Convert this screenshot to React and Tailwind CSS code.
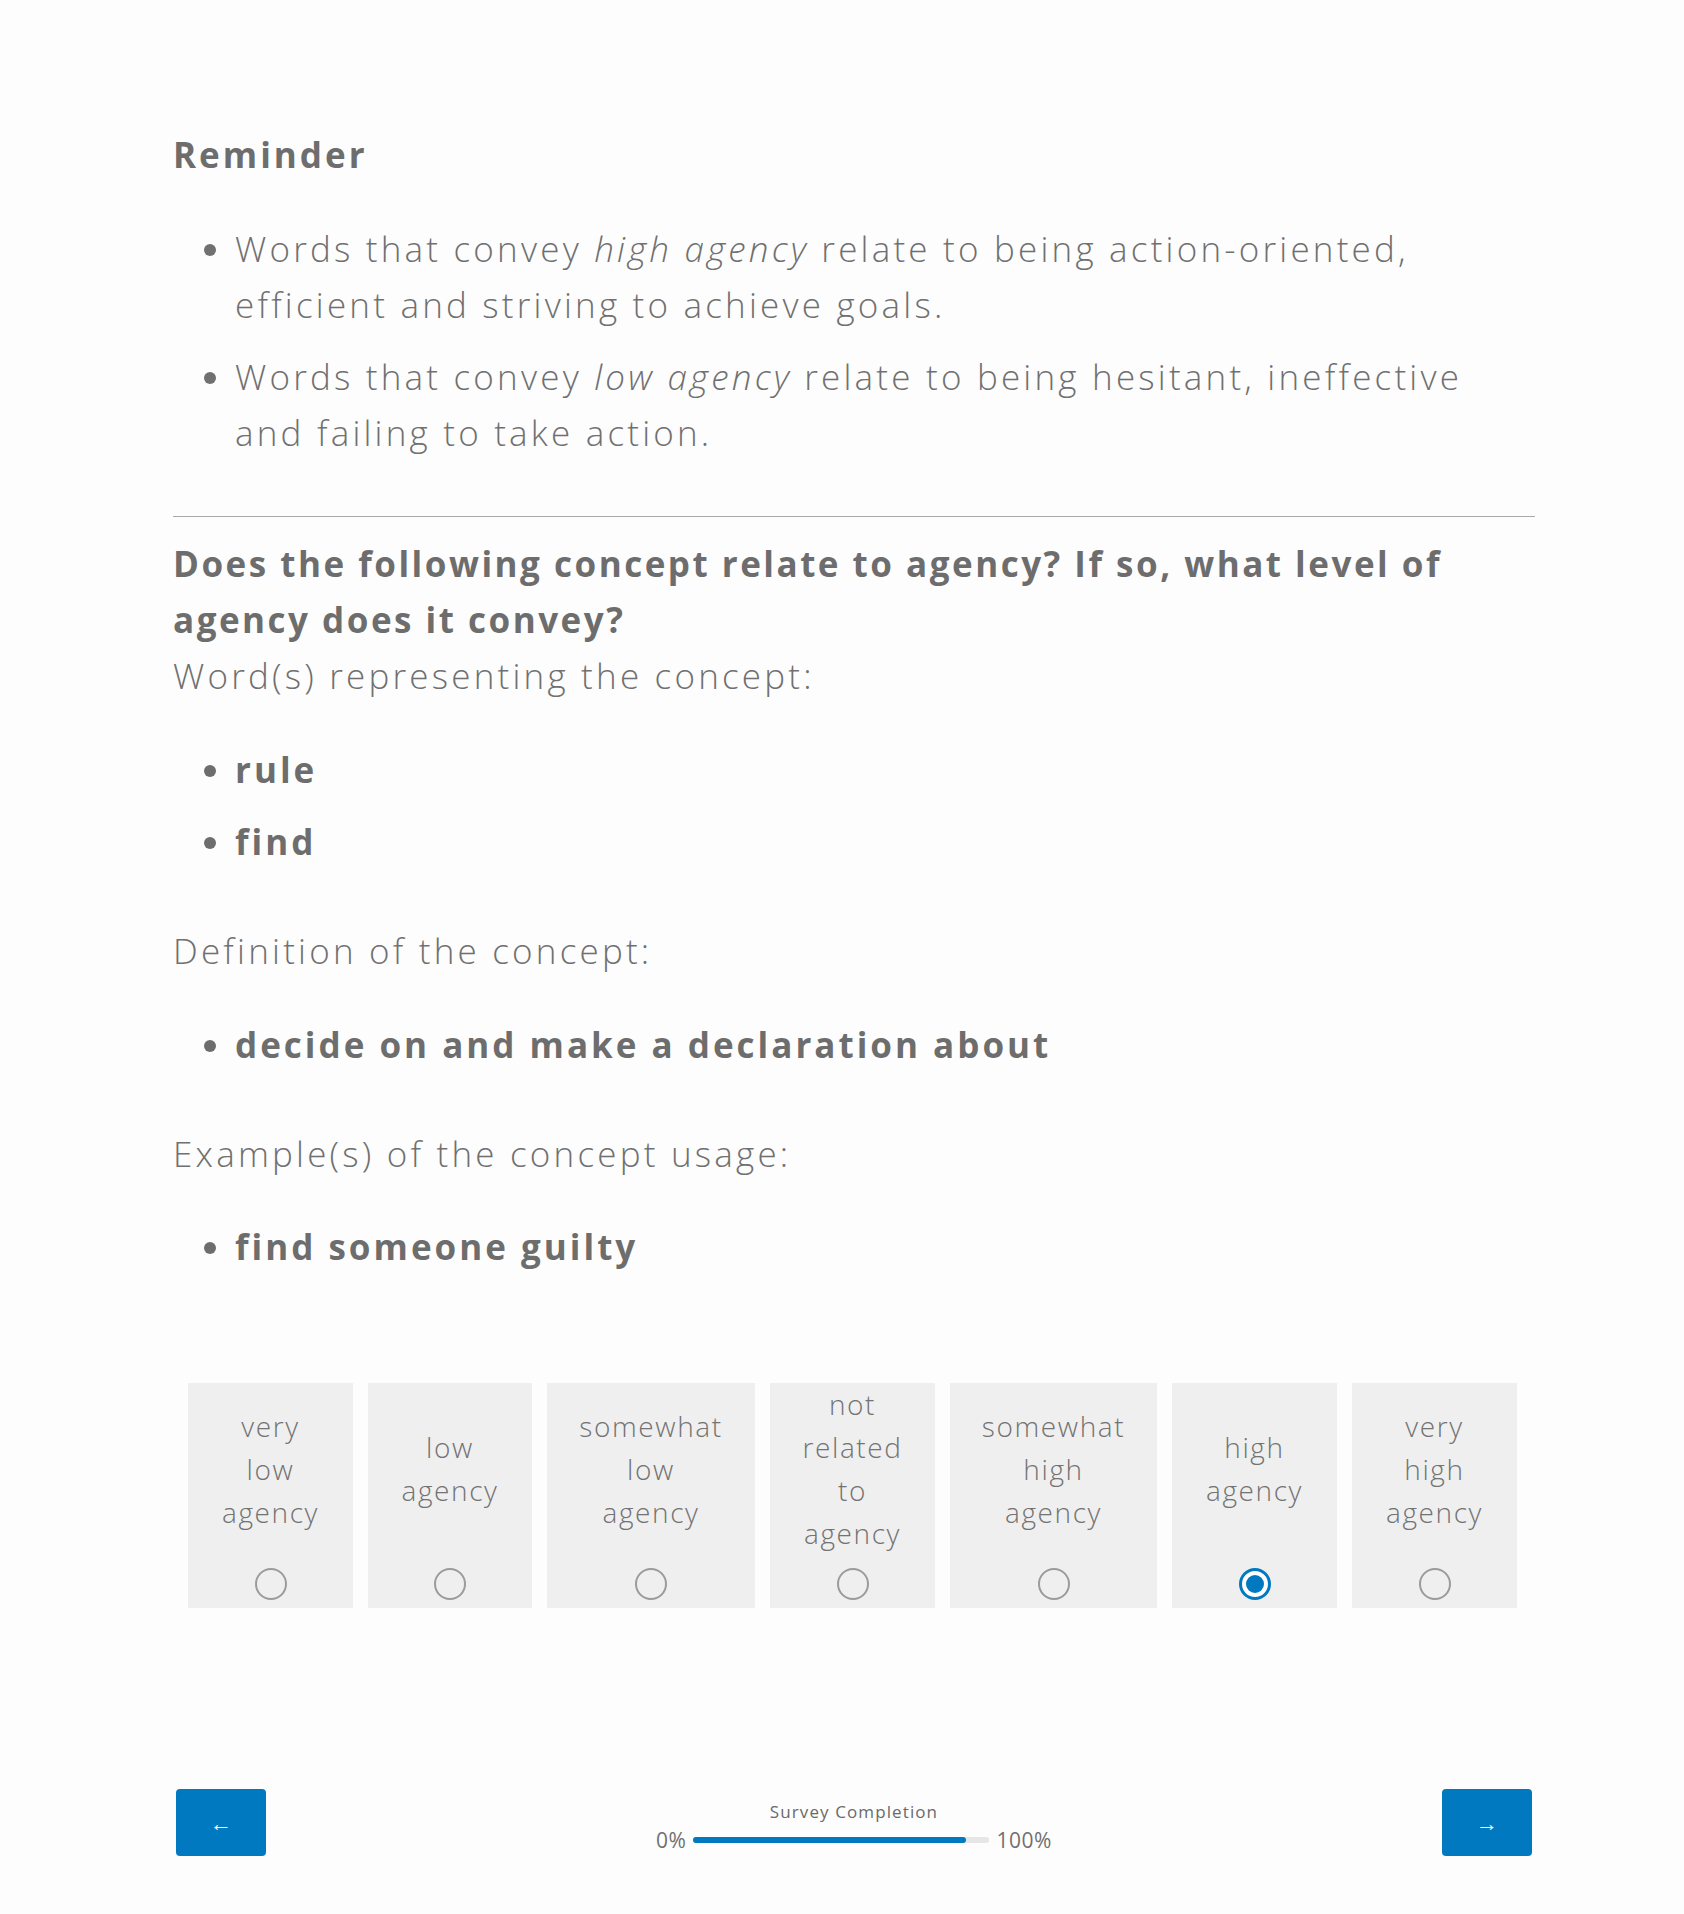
import { useState } from "react";

const options = [
  { id: 1, words: ["very", "low", "agency"], w: "w-[165px]" },
  { id: 2, words: ["low", "agency"], w: "w-[164px]" },
  { id: 3, words: ["somewhat", "low", "agency"], w: "w-[208px]" },
  { id: 4, words: ["not", "related", "to", "agency"], w: "w-[165px]" },
  { id: 5, words: ["somewhat", "high", "agency"], w: "w-[207px]" },
  { id: 6, words: ["high", "agency"], w: "w-[165px]" },
  { id: 7, words: ["very", "high", "agency"], w: "w-[165px]" },
];

function Radio({ checked }) {
  if (checked) {
    return (
      <span className="flex h-[32px] w-[32px] items-center justify-center rounded-full border-[3px] border-[#0079c1] bg-white">
        <span className="h-[18px] w-[18px] rounded-full bg-[#0079c1]" />
      </span>
    );
  }
  return <span className="block h-[32px] w-[32px] rounded-full border-[2.5px] border-[#9b9b9b]" />;
}

export default function App() {
  const [answer, setAnswer] = useState(6);

  return (
    <div className="min-h-screen bg-[#fdfdfd] text-[#707070] font-['Open_Sans',sans-serif]">
      <div className="ml-[173px] w-[1362px] pt-[127px] pb-[58px]">
        {/* Reminder */}
        <h2 className="text-[35px] leading-[56px] font-bold tracking-[3px] text-[#6d6d6d]">Reminder</h2>
        <ul className="mt-[38px] list-disc pl-[62px] text-[35px] leading-[56px] font-light tracking-[3.2px]">
          <li>
            Words that convey <em>high agency</em> relate to being action-oriented,
            <br />
            efficient and striving to achieve goals.
          </li>
          <li className="mt-[16px]">
            Words that convey <em>low agency</em> relate to being hesitant, ineffective
            <br />
            and failing to take action.
          </li>
        </ul>

        <hr className="mt-[55px] border-t border-[#a9a9a9]" />

        {/* Question */}
        <h3 className="mt-[19px] text-[35px] leading-[56px] font-bold tracking-[2.5px] text-[#6d6d6d]">
          Does the following concept relate to agency? If so, what level of
          <br />
          agency does it convey?
        </h3>
        <p className="text-[35px] leading-[56px] font-light tracking-[3.2px]">Word(s) representing the concept:</p>
        <ul className="mt-[38px] list-disc pl-[62px] text-[35px] leading-[56px] font-bold tracking-[3px] text-[#6d6d6d]">
          <li>rule</li>
          <li className="mt-[16px]">find</li>
        </ul>

        <p className="mt-[53px] text-[35px] leading-[56px] font-light tracking-[3.2px]">Definition of the concept:</p>
        <ul className="mt-[38px] list-disc pl-[62px] text-[35px] leading-[56px] font-bold tracking-[3px] text-[#6d6d6d]">
          <li>decide on and make a declaration about</li>
        </ul>

        <p className="mt-[53px] text-[35px] leading-[56px] font-light tracking-[3.2px]">Example(s) of the concept usage:</p>
        <ul className="mt-[37px] list-disc pl-[62px] text-[35px] leading-[56px] font-bold tracking-[3px] text-[#6d6d6d]">
          <li>find someone guilty</li>
        </ul>

        {/* Scale */}
        <div className="mt-[108px] flex gap-[15px] px-[15px]">
          {options.map((o) => (
            <label
              key={o.id}
              onClick={() => setAnswer(o.id)}
              className={`${o.w} flex h-[225px] cursor-pointer flex-col items-center bg-[#efefef]`}
            >
              <span className="flex h-[172px] flex-col items-center justify-center text-[28px] leading-[43px] font-light tracking-[1.6px] text-[#737373]">
                {o.words.map((w) => (
                  <span key={w} className="block">{w}</span>
                ))}
              </span>
              <span className="mt-[13px]">
                <Radio checked={answer === o.id} />
              </span>
            </label>
          ))}
        </div>

        {/* Footer */}
        <div className="mt-[181px] flex items-start justify-between px-[3px]">
          <button className="flex h-[67px] w-[90px] items-center justify-center rounded-[4px] bg-[#0079c1] text-[22px] text-white">
            ←
          </button>
          <div className="mt-[12px] flex flex-col items-center">
            <span className="text-[17px] leading-[22px] tracking-[1.1px] text-[#6a6a6a]">Survey Completion</span>
            <div className="mt-[4px] flex items-center gap-[7px] text-[21px] leading-[26px] tracking-[0.5px] text-[#707070]">
              <span>0%</span>
              <div className="h-[6px] w-[296px] rounded-full bg-[#e6e6e6]">
                <div className="h-full w-[92%] rounded-full bg-[#0079c1]" />
              </div>
              <span>100%</span>
            </div>
          </div>
          <button className="flex h-[67px] w-[90px] items-center justify-center rounded-[4px] bg-[#0079c1] text-[22px] text-white">
            →
          </button>
        </div>
      </div>
    </div>
  );
}
